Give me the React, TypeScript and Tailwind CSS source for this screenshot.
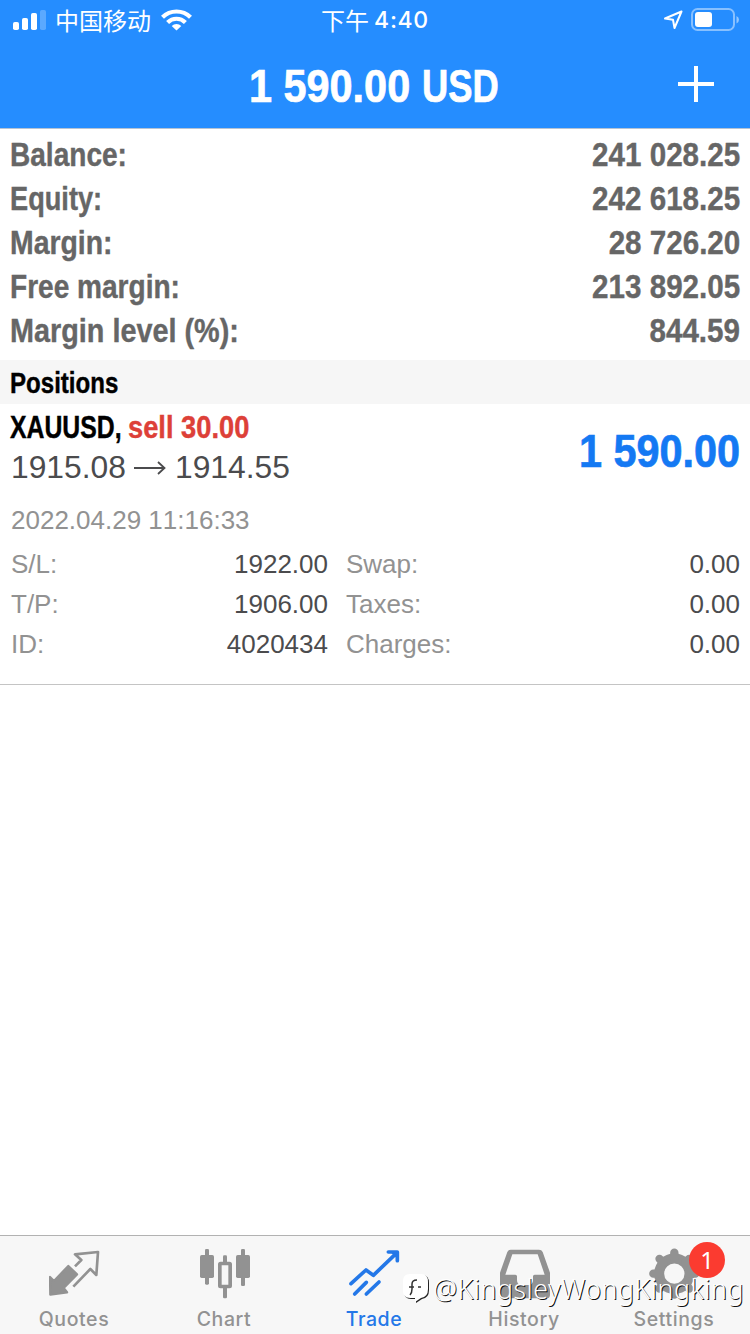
import React from 'react';
import clsx from 'clsx';

const summary = [
    { label: 'Balance:', value: '241 028.25', scale: 'scale-x-[0.825]' },
    { label: 'Equity:', value: '242 618.25', scale: 'scale-x-[0.8]' },
    { label: 'Margin:', value: '28 726.20', scale: 'scale-x-[0.835]' },
    { label: 'Free margin:', value: '213 892.05', scale: 'scale-x-[0.825]' },
    { label: 'Margin level (%):', value: '844.59', scale: 'scale-x-[0.847]' },
];

const details = [
    { label: 'S/L:', value: '1922.00', label2: 'Swap:', value2: '0.00' },
    { label: 'T/P:', value: '1906.00', label2: 'Taxes:', value2: '0.00' },
    { label: 'ID:', value: '4020434', label2: 'Charges:', value2: '0.00' },
];

function StatusBar() {
    return (
        <div className="grid grid-cols-3 h-10 items-center text-white">
            <div className="flex items-center pl-[13px]">
                <svg width="34" height="20" viewBox="0 0 34 20" fill="white">
                    <rect x="0" y="12" width="6" height="8" rx="1.8" />
                    <rect x="9" y="8" width="6" height="12" rx="1.8" />
                    <rect x="18" y="3" width="6" height="17" rx="1.8" />
                    <rect x="27" y="0" width="6" height="20" rx="1.8" opacity="0.25" />
                </svg>
                <span className="ml-2 text-2xl leading-none font-['Noto_Sans_CJK_SC',sans-serif]">
                    中国移动
                </span>
                <svg className="ml-2.5" width="31" height="22" viewBox="0 0 31 22" fill="none" stroke="white" strokeWidth="4.2">
                    <path d="M1.5 8.2a20 20 0 0 1 28 0" />
                    <path d="M6.6 13.4a12.700 12.700 0 0 1 17.800 0" />
                    <path d="M15.500 21.500l-4.800-4.600a6.800 6.800 0 0 1 9.600 0z" fill="white" stroke="none" />
                </svg>
            </div>
            <div className="flex items-center justify-center gap-[5px] leading-none">
                <span className="text-2xl leading-none font-['Noto_Sans_CJK_SC',sans-serif]">下午</span>
                <span className="pt-px text-[23px] leading-none font-medium tracking-[0.7px] font-[Inter,sans-serif]">4:40</span>
            </div>
            <div className="flex items-center justify-end pr-[11px]">
                <svg width="20" height="20" viewBox="0 0 20 20" fill="none" stroke="white" strokeWidth="2" strokeLinejoin="round">
                    <path d="M18.500 1.500L2 8.500l8 1.300 1.500 8.200z" />
                </svg>
                <svg className="ml-2" width="48" height="24" viewBox="0 0 48 24" fill="white">
                    <rect x="1" y="1" width="42" height="21" rx="5.500" fill="none" stroke="white" strokeWidth="2" opacity="0.45" />
                    <rect x="4" y="4" width="17" height="15" rx="3" />
                    <path d="M45.500 8v7.500q2.500-1 2.500-3.700t-2.500-3.800z" opacity="0.5" />
                </svg>
            </div>
        </div>
    );
}

function QuotesIcon() {
    return (
        <svg width="52" height="52" viewBox="147 51 156 156" fill="none" stroke="#929292" strokeWidth="7" strokeLinejoin="round">
            <path d="M205 108l26 25-40 41 10 13-50 7-1-53 12 12z" fill="#929292" />
            <path d="M225 109l19-19-19-17 69-7-5 69-18-18-51 53" strokeWidth="8" />
        </svg>
    );
}

function ChartIcon() {
    return (
        <svg width="52" height="52" viewBox="597 51 156 156" fill="#929292">
            <rect x="600" y="75" width="42" height="69" rx="5" />
            <rect x="615" y="57" width="12" height="107" rx="4" />
            <rect x="708" y="75" width="42" height="69" rx="5" />
            <rect x="723" y="57" width="12" height="111" rx="4" />
            <rect x="669" y="76" width="12" height="28" rx="4" />
            <rect x="669" y="168" width="12" height="37" rx="4" />
            <rect x="659.500" y="100.500" width="31" height="69" rx="2" fill="none" stroke="#929292" strokeWidth="11" />
        </svg>
    );
}

function TradeIcon() {
    return (
        <svg width="52" height="52" viewBox="87 51 156 156" fill="none" stroke="#2478e8" strokeWidth="11" strokeLinecap="round" strokeLinejoin="round">
            <path d="M93 161l45-41 22 16 68-65" />
            <path d="M205 66h27v26" />
            <path d="M214 66l18 18V66z" fill="#2478e8" strokeWidth="4" />
            <path d="M104 192l35-35M139 192l38-36" />
        </svg>
    );
}

function HistoryIcon() {
    return (
        <svg width="52" height="52" viewBox="537 51 156 156" fill="#929292">
            <path
                fillRule="evenodd"
                d="M573 59h84q8 0 11 7l22 62v66q0 11-11 11H551q-11 0-11-11v-66l22-62q3-7 11-7zM577 73l-21 61h30q5 0 5 5v12q0 14 14 14h20q14 0 14-14v-12q0-5 5-5h30l-21-61z"
            />
        </svg>
    );
}

function SettingsIcon() {
    return (
        <svg width="52" height="52" viewBox="-76 -80 156 156" fill="none" stroke="#929292">
            <circle r="45.500" strokeWidth="30" />
            <path
                d="M0-47V-63M0 47V63M-47 0H-63M47 0H63M-33-33L-44.500-44.500M33 33L44.500 44.500M-33 33L-44.500 44.500M33-33L44.500-44.500"
                strokeWidth="25"
                strokeLinecap="round"
            />
        </svg>
    );
}

const tabs = [
    { name: 'Quotes', icon: QuotesIcon },
    { name: 'Chart', icon: ChartIcon },
    { name: 'Trade', icon: TradeIcon, active: true },
    { name: 'History', icon: HistoryIcon },
    { name: 'Settings', icon: SettingsIcon, badge: 1 },
];

function TabBar() {
    return (
        <nav className="relative grid grid-cols-5 h-[99px] border-t border-[#b2b2b2] bg-[#f7f7f7]">
            {tabs.map(({ name, icon: Icon, active, badge }) => (
                <div key={name} className="flex flex-col items-center pt-[11px]">
                    <div className="relative">
                        <Icon />
                        {badge && (
                            <span className="absolute -top-[5px] left-10 size-9 rounded-full bg-[#fb3b30] flex items-center justify-center text-2xl leading-6 text-white font-['Noto_Sans',sans-serif]">
                                {badge}
                            </span>
                        )}
                    </div>
                    <span
                        className={clsx(
                            'mt-2 -ml-0.5 text-[19.5px] leading-6 font-medium tracking-[0.6px] font-[Inter,sans-serif]',
                            active ? 'text-[#2478e8]' : 'text-[#929292]'
                        )}
                    >
                        {name}
                    </span>
                </div>
            ))}
            <div className="absolute right-[6px] top-[35px] flex items-center gap-[3px] text-white">
                <svg width="28" height="32" viewBox="0 0 28 32">
                    <path d="M8 1h11q7 0 7 8v7q0 8-7 9l-6 4v-4H8q-7 0-7-7V8q0-7 7-7z" fill="#222" transform="translate(1 1)" />
                    <path d="M8 1h11q7 0 7 8v7q0 8-7 9l-6 4v-4H8q-7 0-7-7V8q0-7 7-7z" fill="white" />
                    <path d="M8 22q2-2 2-6v-5q0-4 5-4M7 14h5M16 14h3" fill="none" stroke="#333" strokeWidth="1.500" />
                </svg>
                <span className="text-[26.7px] leading-9 font-light tracking-[0.55px] font-['Noto_Sans',sans-serif] [text-shadow:1px_1px_0_#111]">
                    @KingsleyWongKingking
                </span>
            </div>
        </nav>
    );
}

export default function App() {
    return (
        <div className="w-[750px] h-[1334px] flex flex-col bg-white overflow-hidden font-['Liberation_Sans',Arial,sans-serif]">
            <header className="h-[129px] shrink-0 bg-[#258dff] border-b border-[#b5c3d4]">
                <StatusBar />
                <div className="grid grid-cols-[1fr_2fr_1fr] h-[88px] items-center text-white">
                    <h1 className="col-start-2 flex pl-[61px] pt-[3px] text-[46px] font-bold leading-none whitespace-nowrap [-webkit-text-stroke:0.7px]">
                        <span className="w-[173px] origin-left scale-x-[0.9]">1 590.00</span>
                        <span className="origin-left scale-x-[0.79]">USD</span>
                    </h1>
                    <svg className="justify-self-end mr-9" width="36" height="36" viewBox="0 0 36 36" stroke="white" strokeWidth="4">
                        <path d="M18 0v36M0 18h36" />
                    </svg>
                </div>
            </header>

            <section className="h-[231px] shrink-0 pt-[3px] px-2.5 text-[34px] font-bold text-[#666] [-webkit-text-stroke:0.4px]">
                {summary.map((row) => (
                    <div key={row.label} className="flex justify-between h-11 leading-[44px]">
                        <span className={clsx('origin-left', row.scale)}>{row.label}</span>
                        <span className="origin-right scale-x-[0.87]">{row.value}</span>
                    </div>
                ))}
            </section>

            <div className="h-11 shrink-0 px-2.5 bg-[#f6f6f6] text-[29px] leading-[46px] font-bold text-black">
                <span className="inline-block origin-left scale-x-[0.83] [-webkit-text-stroke:0.4px]">Positions</span>
            </div>

            <section className="h-[281px] shrink-0 px-2.5 border-b border-[#c4c4c4]">
                <div className="flex justify-between items-center h-[88px]">
                    <div>
                        <div className="flex h-[42px] text-[31px] leading-[44px] font-bold [-webkit-text-stroke:0.4px]">
                            <span className="w-[118px] whitespace-nowrap origin-left scale-x-[0.8] text-black">XAUUSD,</span>
                            <span className="whitespace-nowrap origin-left scale-x-[0.88] text-[#dd4038]">sell 30.00</span>
                        </div>
                        <div className="flex items-center h-[42px] pl-px pb-0.5 text-[31.8px] text-[#4b4b4d]">
                            1915.08
                            <svg className="ml-2 mr-[9px]" width="32" height="16" viewBox="0 0 32 16" fill="none" stroke="#4b4b4d" strokeWidth="1.800">
                                <path d="M0 8h30M24 2l6.500 6-6.500 6" />
                            </svg>
                            1914.55
                        </div>
                    </div>
                    <span className="origin-right scale-x-[0.9] pt-1.5 text-[46px] leading-none font-bold text-[#1479f3] [-webkit-text-stroke:0.7px]">
                        1 590.00
                    </span>
                </div>
                <div className="h-[52px] pl-px pt-[9px] text-[26px] leading-[38px] text-[#929292] [font-kerning:none]">
                    2022.04.29 11:16:33
                </div>
                {details.map((row) => (
                    <div key={row.label} className="flex h-10 pl-px text-[26px] leading-10 text-[#929292]">
                        <span>{row.label}</span>
                        <span className="ml-auto text-[#4b4b4d]">{row.value}</span>
                        <div className="flex justify-between w-[394px] ml-[18px]">
                            <span>{row.label2}</span>
                            <span className="text-[#4b4b4d]">{row.value2}</span>
                        </div>
                    </div>
                ))}
            </section>

            <div className="flex-1" />
            <TabBar />
        </div>
    );
}
